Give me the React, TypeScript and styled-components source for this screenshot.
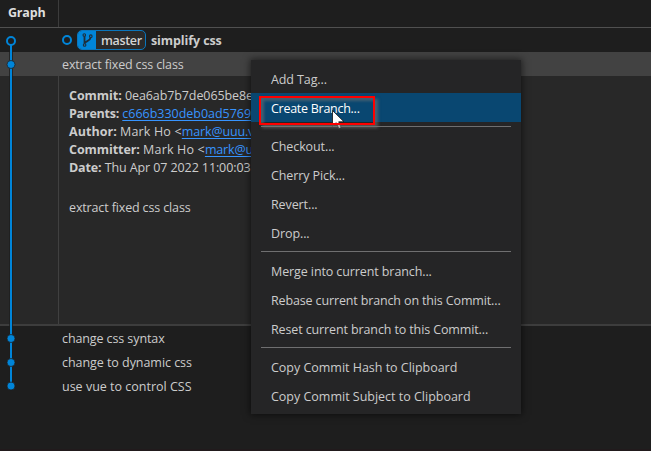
import React from "react";
import styled, { createGlobalStyle, css } from "styled-components";

const Global = createGlobalStyle`
  * { box-sizing: border-box; }
  body {
    margin: 0;
    background: #1e1e1e;
    color: #cccccc;
    font-family: "Open Sans", "Noto Sans", sans-serif;
    font-size: 12.5px;
    overflow: hidden;
  }
`;

const Page = styled.main`
  position: relative;
  width: 651px;
  height: 451px;
  display: flex;
  flex-direction: column;
  overflow: hidden;
  white-space: nowrap;
  background: #1e1e1e;
  border-bottom: 2px solid #211a1c;
`;

const Text = styled.span<{ $ls?: number; $bold?: boolean }>`
  letter-spacing: ${(p) => p.$ls ?? -0.1}px;
  ${(p) => p.$bold && css`font-weight: 700;`}
`;

const Header = styled.header`
  display: flex;
  flex: none;
  height: 28px;
  border-bottom: 1px solid #505050;
`;

const HeaderCell = styled.div`
  width: 59px;
  padding-left: 8px;
  line-height: 25px;
  color: #dedede;
  border-right: 1px solid #3c3c3c;
`;

const Row = styled.div<{ $selected?: boolean }>`
  display: flex;
  flex: none;
  align-items: center;
  height: 24px;
  padding-left: 62px;
  background: ${(p) => (p.$selected ? "#424242" : "transparent")};
`;

const HeadDot = styled.span`
  width: 10px;
  height: 10px;
  margin-right: 5px;
  border: 2px solid #0085d9;
  border-radius: 50%;
`;

const BranchTag = styled.span`
  display: flex;
  width: 69px;
  height: 20px;
  margin-right: 5px;
  overflow: hidden;
  border: 1px solid #0a76bd;
  border-radius: 5px;
  background: #2a2a2a;
`;

const BranchIcon = styled.span`
  width: 18px;
  height: 18px;
  background: #0085d9;
`;

const BranchName = styled.span`
  padding-left: 5px;
  line-height: 20px;
  font-weight: 600;
  color: #d4d4d4;
`;

const Details = styled.section`
  display: flex;
  flex: none;
  height: 250px;
  background: #282828;
  border-bottom: 2px solid #3d3d3d;
`;

const GraphColumn = styled.div`
  width: 59px;
  border-right: 1px solid #404040;
`;

const Summary = styled.div`
  padding: 11px 0 0 10px;
  line-height: 18px;
`;

const Line = styled.div`
  height: 18px;
`;

const Message = styled.div`
  margin-top: 22px;
`;

const Link = styled.a`
  color: #3794ff;
  text-decoration: underline;
  text-underline-offset: 2px;
`;

const Graph = styled.svg`
  position: absolute;
  left: 0;
  top: 28px;
`;

const Menu = styled.nav`
  position: absolute;
  left: 251px;
  top: 60px;
  width: 270px;
  padding: 4px 0;
  background: #252526;
  box-shadow: 0 0 7px 1px rgba(0, 0, 0, 0.55);
`;

const MenuItem = styled.div<{ $active?: boolean }>`
  height: 29px;
  padding-left: 20px;
  line-height: 31px;
  color: ${(p) => (p.$active ? "#ffffff" : "#cccccc")};
  background: ${(p) => (p.$active ? "#094771" : "transparent")};
`;

const Divider = styled.div`
  height: 1px;
  margin: 4px 10px;
  background: #6f6f70;
`;

const Highlight = styled.div`
  position: absolute;
  left: 259px;
  top: 96px;
  width: 116px;
  height: 29px;
  border: 2px solid #ff0000;
  box-shadow: 3px 3px 3px rgba(115, 115, 115, 0.6), inset 3px 3px 3px rgba(115, 115, 115, 0.55);
`;

const Cursor = styled.svg`
  position: absolute;
  left: 332px;
  top: 110px;
`;

const groups: { label: string; ls?: number; active?: boolean }[][] = [
  [{ label: "Add Tag..." }, { label: "Create Branch...", ls: -0.27, active: true }],
  [{ label: "Checkout..." }, { label: "Cherry Pick..." }, { label: "Revert..." }, { label: "Drop..." }],
  [
    { label: "Merge into current branch..." },
    { label: "Rebase current branch on this Commit...", ls: -0.14 },
    { label: "Reset current branch to this Commit...", ls: -0.12 },
  ],
  [
    { label: "Copy Commit Hash to Clipboard", ls: -0.02 },
    { label: "Copy Commit Subject to Clipboard", ls: -0.01 },
  ],
];

export default function App() {
  return (
    <>
      <Global />
      <Page>
        <Header>
          <HeaderCell><Text $bold $ls={-0.18}>Graph</Text></HeaderCell>
        </Header>
        <Row>
          <HeadDot />
          <BranchTag>
            <BranchIcon>
              <svg width="18" height="18" viewBox="0 0 18 18" fill="none" stroke="#1d2f3c">
                <circle cx="6.3" cy="4" r="1.3" strokeWidth="1.1" />
                <circle cx="12.8" cy="5.2" r="1.3" strokeWidth="1.1" />
                <circle cx="6.6" cy="14" r="1.3" strokeWidth="1.1" />
                <path d="M6.5 5.3v7.5M7 12.2c.7-2.4 5-1.8 5.6-5.6" strokeWidth="1.8" />
              </svg>
            </BranchIcon>
            <BranchName><Text $ls={-0.35}>master</Text></BranchName>
          </BranchTag>
          <Text $bold>simplify css</Text>
        </Row>
        <Row $selected><Text $ls={-0.14}>extract fixed css class</Text></Row>
        <Details>
          <GraphColumn />
          <Summary>
            <Line><Text $bold $ls={-0.05}>Commit:</Text> <Text>0ea6ab7b7de065be8e41</Text></Line>
            <Line><Text $bold $ls={-0.23}>Parents:</Text> <Link><Text $ls={-0.02}>c666b330deb0ad57697</Text></Link></Line>
            <Line>
              <Text $bold $ls={0.04}>Author:</Text> <Text $ls={0.17}>Mark Ho &lt;</Text>
              <Link><Text $ls={-0.15}>mark@uuu.v</Text></Link>
            </Line>
            <Line>
              <Text $bold $ls={-0.07}>Committer:</Text> <Text $ls={0.17}>Mark Ho &lt;</Text>
              <Link><Text $ls={-0.15}>mark@uuu</Text></Link>
            </Line>
            <Line><Text $bold $ls={-0.15}>Date:</Text> <Text>Thu Apr 07 2022 11:00:03</Text></Line>
            <Message><Text $ls={-0.14}>extract fixed css class</Text></Message>
          </Summary>
        </Details>
        <Row><Text>change css syntax</Text></Row>
        <Row><Text $ls={-0.05}>change to dynamic css</Text></Row>
        <Row><Text $ls={0}>use vue to control CSS</Text></Row>
        <Graph width="24" height="372" viewBox="0 28 24 372">
          <path d="M11 41V386" stroke="#1e1e1e" strokeOpacity=".75" strokeWidth="4" />
          <path d="M11 41V386" stroke="#0085d9" strokeWidth="2" />
          <circle cx="11" cy="41" r="4" fill="#1e1e1e" stroke="#0085d9" strokeWidth="2" />
          {[64.5, 338.5, 362.5, 386].map((y) => (
            <circle key={y} cx="11" cy={y} r="4" fill="#0085d9" stroke="#1e1e1e" strokeOpacity=".75" />
          ))}
        </Graph>
        <Menu>
          {groups.map((items, i) => (
            <React.Fragment key={i}>
              {i > 0 && <Divider />}
              {items.map((item) => (
                <MenuItem key={item.label} $active={item.active}>
                  <Text $ls={item.ls}>{item.label}</Text>
                </MenuItem>
              ))}
            </React.Fragment>
          ))}
        </Menu>
        <Cursor width="14" height="20" viewBox="0 0 14 20">
          <path d="M.5.5V16.2L4.2 12.7 6.8 18.5 9.2 17.5 6.7 11.8H12Z" fill="#fff" stroke="#111" strokeWidth=".8" />
        </Cursor>
        <Highlight />
      </Page>
    </>
  );
}
